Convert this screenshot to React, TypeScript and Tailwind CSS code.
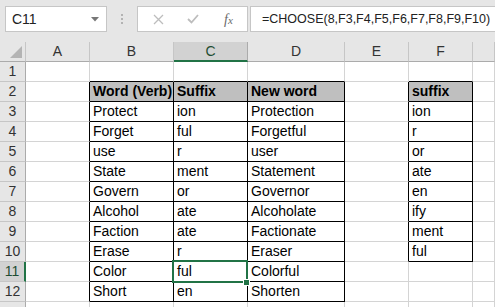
import React from "react";

const cols = ["A", "B", "C", "D", "E", "F", "G"];
const widths = ["w-[64px]", "w-[84px]", "w-[74px]", "w-[97px]", "w-[64px]", "w-[64px]", "flex-1"];

type CellDef = { t: string; bold?: boolean; head?: boolean };
const data: Record<string, CellDef> = {};
const tableB = [
  ["Protect", "ion", "Protection"],
  ["Forget", "ful", "Forgetful"],
  ["use", "r", "user"],
  ["State", "ment", "Statement"],
  ["Govern", "or", "Governor"],
  ["Alcohol", "ate", "Alcoholate"],
  ["Faction", "ate", "Factionate"],
  ["Erase", "r", "Eraser"],
  ["Color", "ful", "Colorful"],
  ["Short", "en", "Shorten"],
];
data["B2"] = { t: "Word (Verb)", bold: true, head: true };
data["C2"] = { t: "Suffix", bold: true, head: true };
data["D2"] = { t: "New word", bold: true, head: true };
tableB.forEach((r, i) => {
  data["B" + (i + 3)] = { t: r[0] };
  data["C" + (i + 3)] = { t: r[1] };
  data["D" + (i + 3)] = { t: r[2] };
});
data["F2"] = { t: "suffix", bold: true, head: true };
["ion", "r", "or", "ate", "en", "ify", "ment", "ful"].forEach((s, i) => {
  data["F" + (i + 3)] = { t: s };
});

function inTable(c: number, r: number) {
  if (c >= 1 && c <= 3 && r >= 2 && r <= 12) return true;
  if (c === 5 && r >= 2 && r <= 10) return true;
  return false;
}

function Cell({ c, r }: { c: number; r: number }) {
  const key = cols[c] + r;
  const d = data[key];
  const rightBlack = inTable(c, r) || inTable(c + 1, r);
  const bottomBlack = inTable(c, r) || inTable(c, r + 1);
  return (
    <div
      className={
        "h-[20px] box-border border-r border-b flex items-end pl-[3px] pb-[1px] overflow-hidden whitespace-nowrap text-[14px] leading-[17px] text-black " +
        widths[c] +
        " " +
        (rightBlack ? "border-r-black" : "border-r-[#d4d4d4]") +
        " " +
        (bottomBlack ? "border-b-black" : "border-b-[#d4d4d4]") +
        " " +
        (d && d.head ? "bg-[#bfbfbf]" : "bg-white") +
        " " +
        (d && d.bold ? "font-bold" : "")
      }
    >
      {d ? d.t : ""}
    </div>
  );
}

export default function App() {
  const rows = Array.from({ length: 13 }, (_, i) => i + 1);
  return (
    <div
      className="w-[495px] h-[307px] overflow-hidden bg-[#e6e6e6] relative"
      style={{ fontFamily: '"Liberation Sans", Arial, sans-serif' }}
    >
      {/* Formula bar */}
      <div className="h-[42px] flex items-start pt-[6px] pl-[5px]">
        <div className="w-[102px] h-[26px] bg-white border border-[#c6c6c6] box-border flex items-center justify-between pl-[6px] pr-[7px] text-[14px] text-[#222]">
          <span>C11</span>
          <svg width="8" height="5" viewBox="0 0 8 5">
            <path d="M0 0 L8 0 L4 4.5 Z" fill="#777" />
          </svg>
        </div>
        <div className="w-[30px] h-[26px] flex flex-col items-center justify-center gap-[2px]">
          <div className="w-[2px] h-[2px] bg-[#b3b3b3]" />
          <div className="w-[2px] h-[2px] bg-[#b3b3b3]" />
          <div className="w-[2px] h-[2px] bg-[#b3b3b3]" />
        </div>
        <div className="w-[111px] h-[26px] bg-white border border-[#c6c6c6] box-border flex items-center">
          <div className="w-[36px] flex justify-center pl-[4px]">
            <svg width="11" height="11" viewBox="0 0 11 11">
              <path d="M1 1 L10 10 M10 1 L1 10" stroke="#bdbdbd" strokeWidth="1.3" />
            </svg>
          </div>
          <div className="w-[38px] flex justify-center">
            <svg width="12" height="10" viewBox="0 0 12 10">
              <path d="M1 5 L4.5 8.5 L11 1" stroke="#bdbdbd" strokeWidth="1.8" fill="none" />
            </svg>
          </div>
          <div
            className="flex-1 flex justify-center text-[14px] italic text-[#6a6a6a] pr-[2px]"
            style={{ fontFamily: '"Liberation Serif", "Times New Roman", serif' }}
          >
            <span>
              f<span className="text-[11px]">x</span>
            </span>
          </div>
        </div>
        <div className="ml-[2px] flex-1 h-[26px] bg-white border border-r-0 border-[#c6c6c6] box-border flex items-center pl-[11px] text-[12.5px] text-[#222] whitespace-nowrap">
          =CHOOSE(8,F3,F4,F5,F6,F7,F8,F9,F10)
        </div>
      </div>

      {/* Column headers */}
      <div className="flex h-[20px]">
        <div className="w-[26px] h-[20px] box-border border-r border-b border-r-[#c6c6c6] border-b-[#ababab] relative">
          <svg className="absolute left-[10px] top-[4px]" width="12" height="12" viewBox="0 0 12 12">
            <path d="M12 0 L12 12 L0 12 Z" fill="#b4b4b4" />
          </svg>
        </div>
        {cols.map((c, i) => (
          <div
            key={c}
            className={
              "h-[20px] box-border border-r flex items-center justify-center text-[14px] " +
              widths[i] +
              " " +
              (c === "C"
                ? "bg-[#d2d2d2] border-b-2 border-b-[#217346] border-r-[#ababab] text-[#1f4d33]"
                : "border-b border-b-[#ababab] border-r-[#c6c6c6] text-[#333]")
            }
          >
            {c === "G" ? "" : c}
          </div>
        ))}
      </div>

      {/* Rows */}
      {rows.map((r) => (
        <div key={r} className="flex h-[20px]">
          <div
            className={
              "w-[26px] h-[20px] box-border border-b border-b-[#c6c6c6] flex items-center justify-center text-[14px] " +
              (r === 11
                ? "bg-[#d2d2d2] border-r-2 border-r-[#217346] text-[#1f4d33]"
                : "border-r border-r-[#ababab] text-[#333]")
            }
          >
            {r === 13 ? "" : r}
          </div>
          {cols.map((_, c) => (
            <Cell key={c} c={c} r={r} />
          ))}
        </div>
      ))}

      {/* Selection C11 */}
      <div className="absolute left-[172px] top-[260px] w-[76px] h-[23px] border-2 border-[#217346] box-border pointer-events-none" />
      <div className="absolute left-[243px] top-[279px] w-[7px] h-[7px] bg-[#217346] border border-white box-border" />
    </div>
  );
}
